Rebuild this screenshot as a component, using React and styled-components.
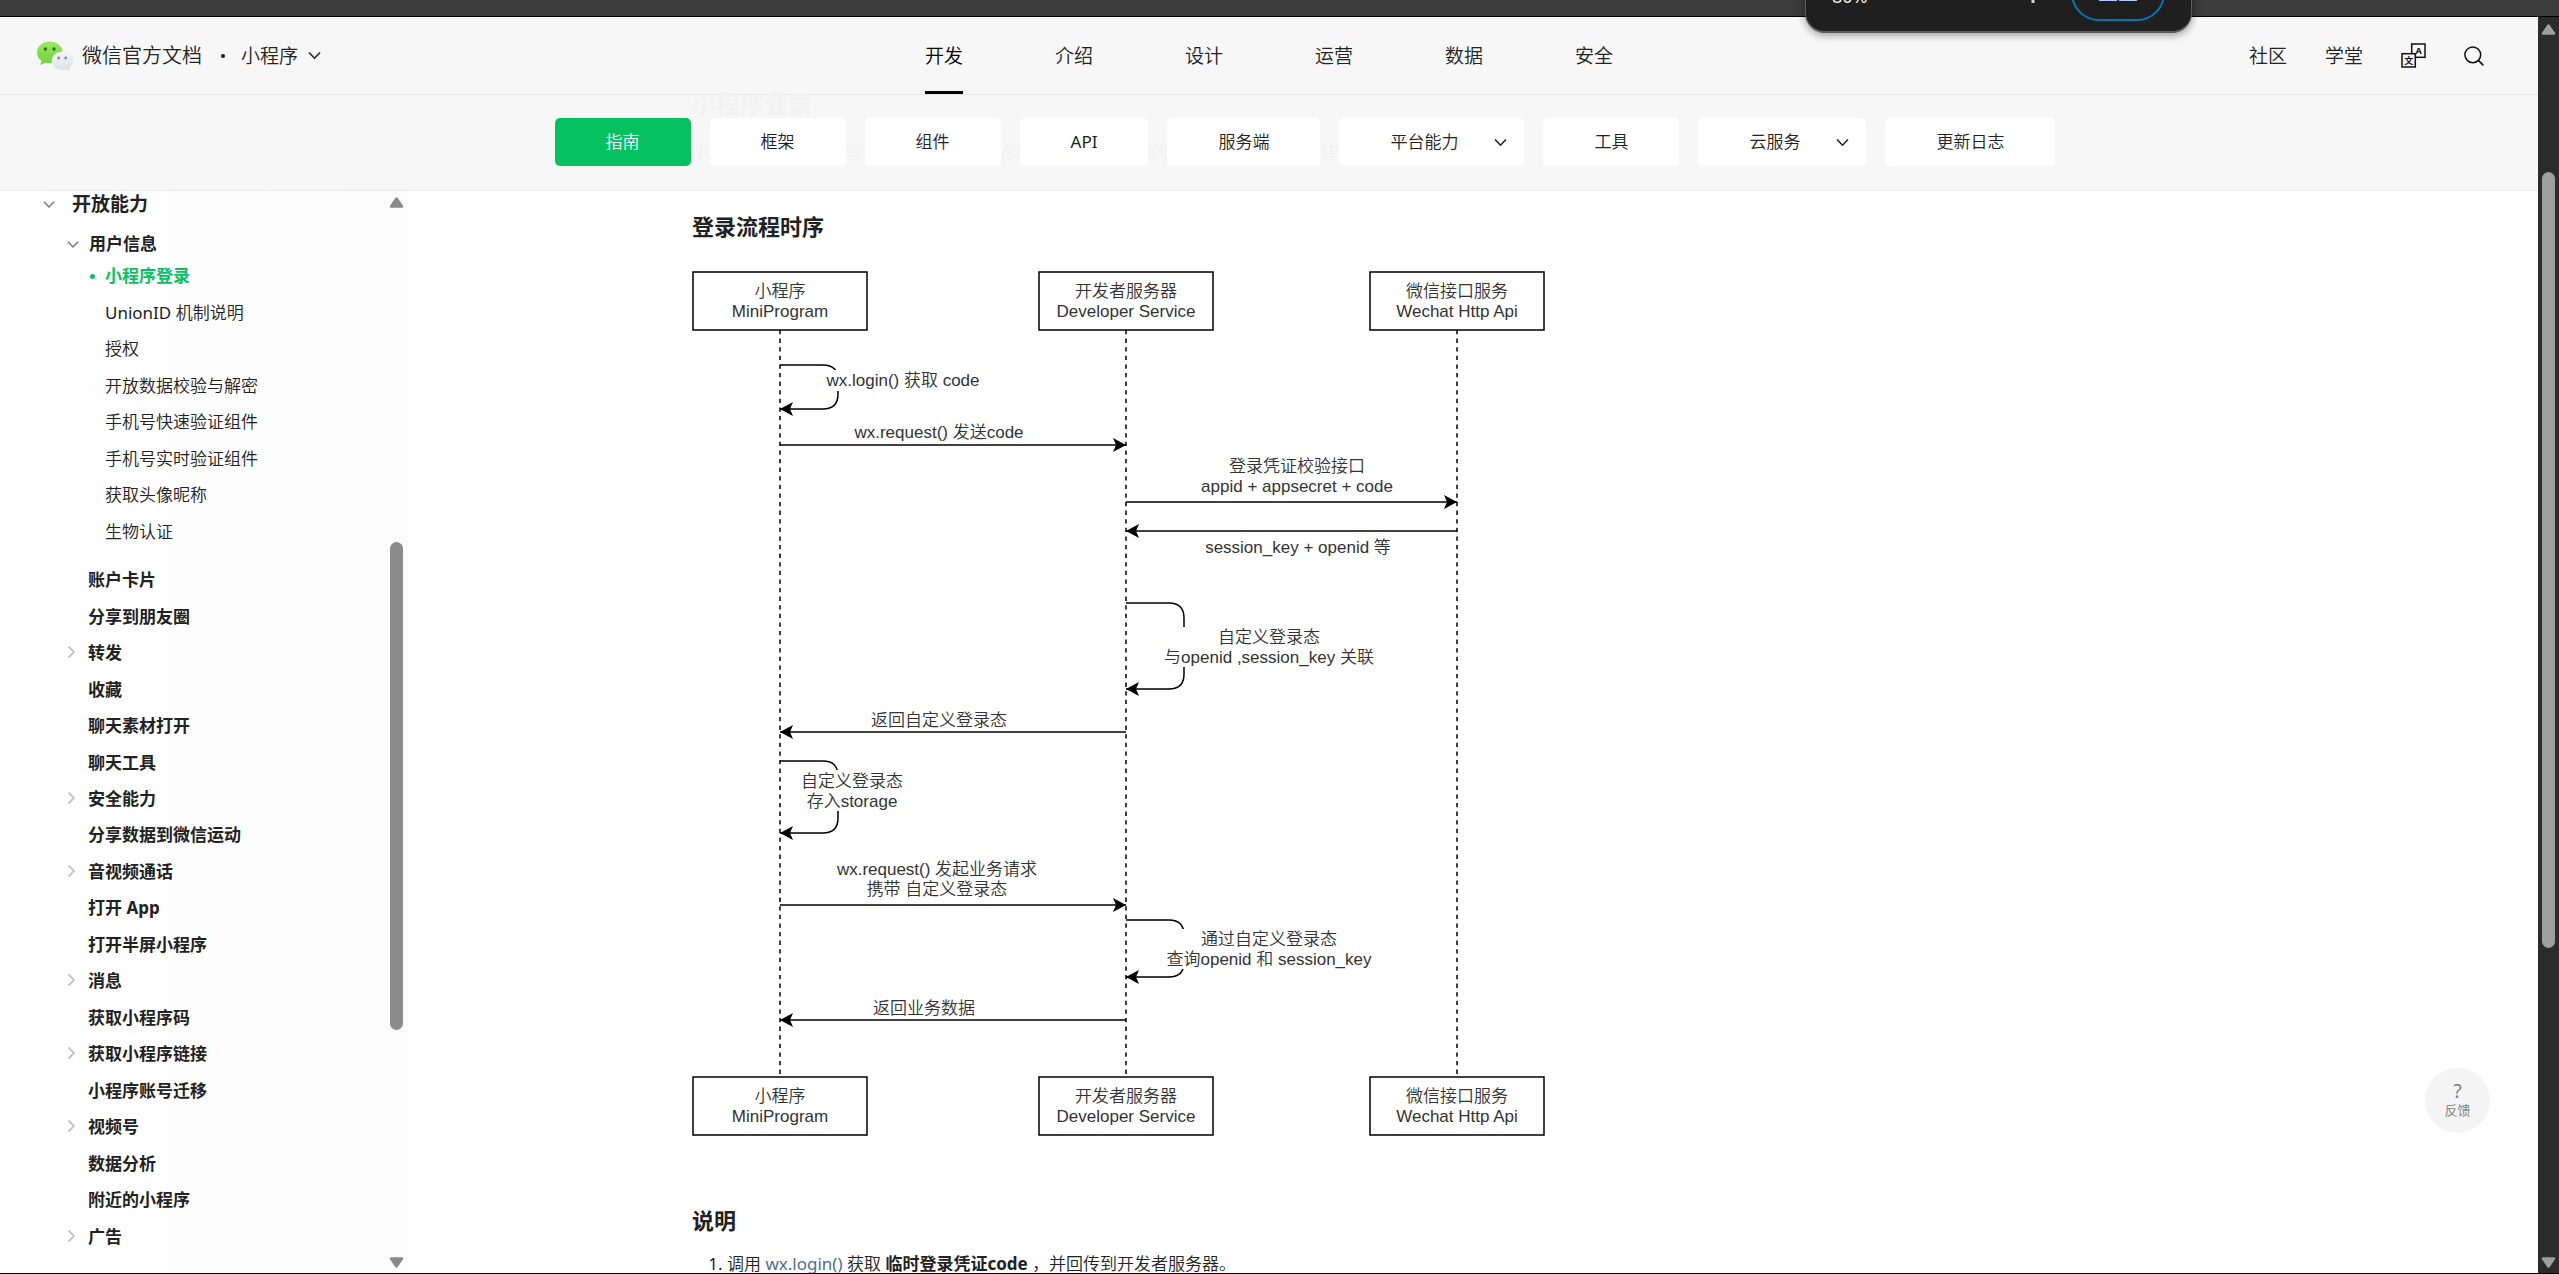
import React from "react";
import styled, { createGlobalStyle, css } from "styled-components";

const GlobalStyle = createGlobalStyle`
  * {
    box-sizing: border-box;
  }

  body {
    margin: 0;
    overflow: hidden;
    background: #fff;
    color: #222;
    font-family: "Noto Sans", "Noto Sans CJK SC", sans-serif;
    font-size: 17px;
    font-weight: 350;
  }

  button {
    padding: 0;
    border: 0;
    background: none;
    color: inherit;
    font: inherit;
    cursor: pointer;
  }

  a {
    color: inherit;
    text-decoration: none;
  }

  ul {
    margin: 0;
    padding: 0;
    list-style: none;
  }
`;

const Window = styled.div`
  position: relative;
  display: flex;
  flex-direction: column;
  height: 100vh;
  overflow: hidden;
  border-bottom: 1px solid #000;
`;

const Strip = styled.div`
  flex: none;
  height: 17px;
  background: #3b3b3b;
  border-bottom: 1px solid #000;
`;

const Viewport = styled.div`
  display: flex;
  flex: 1;
  min-height: 0;
`;

const Site = styled.div`
  display: flex;
  flex-direction: column;
  flex: 1;
  min-width: 0;
`;

// latin glyphs get too thin at the body weight
const Latin = styled.span`
  font-weight: 400;
`;

/* zoom popup hanging from the browser toolbar */

const ZoomPopup = styled.div`
  position: absolute;
  top: -46px;
  right: 367px;
  display: flex;
  align-items: center;
  width: 387px;
  height: 79px;
  padding: 0 26px;
  background: #1f1f1f;
  border: 1px solid #5c5c5c;
  border-bottom-width: 2px;
  border-radius: 20px;
  box-shadow: 0 2px 8px rgba(0, 0, 0, 0.4);
  color: #f0f0f0;
  font-size: 18px;
  line-height: 24px;
`;

const ZoomLevel = styled.span`
  padding-top: 6px;
  font-weight: 400;
`;

const ZoomPlus = styled.button`
  display: flex;
  margin-left: auto;
`;

const ZoomReset = styled.button`
  width: 94px;
  height: 56px;
  margin-left: 30px;
  border: 2px solid #0078b4;
  border-radius: 28px;
  color: #b9c8ff;
  font-size: 20px;
`;

/* header */

const Header = styled.header`
  display: grid;
  grid-template-columns: 1fr auto 1fr;
  align-items: center;
  flex: none;
  height: 78px;
  padding: 0 36px;
  background: #f7f7f7;
  border-bottom: 1px solid #e4e4e4;
  font-size: 19px;
  line-height: 28px;
`;

const Brand = styled.div`
  display: flex;
  align-items: center;
`;

const BrandName = styled.a`
  display: flex;
  align-items: center;
  gap: 8px;
  font-size: 20px;
`;

const Dot = styled.span`
  width: 4px;
  height: 4px;
  margin: 0 16px 0 19px;
  border-radius: 2px;
  background: #222;
`;

const ProductButton = styled.button`
  display: flex;
  align-items: center;
  gap: 10px;
`;

const Nav = styled.nav`
  display: flex;
  gap: 92px;
  height: 77px;
`;

const NavLink = styled.a`
  display: flex;
  align-items: center;
  border-top: 3px solid transparent;
  border-bottom: 3px solid ${props => (props.$active ? "#000" : "transparent")};
  color: ${props => (props.$active ? "#000" : "#222")};
`;

const Tools = styled.div`
  display: flex;
  align-items: center;
  justify-content: flex-end;
  gap: 38px;
  padding-right: 18px;

  button {
    display: flex;
  }
`;

/* second level tabs */

const SubNav = styled.nav`
  position: relative;
  display: flex;
  align-items: center;
  justify-content: center;
  gap: 19px;
  flex: none;
  height: 96px;
  padding: 0 0 1px 72px;
  background: #f7f7f7;
  border-bottom: 1px solid #ebebeb;
`;

const Tab = styled.a`
  position: relative;
  display: flex;
  align-items: center;
  height: 48px;
  padding: 0 ${props => (props.$more ? 17 : 51)}px 0 51px;
  border-radius: 5px;
  background: ${props => (props.$active ? "#07c160" : "#fff")};
  color: ${props => (props.$active ? "#fff" : "#222")};
  line-height: 24px;

  svg {
    margin-left: 36px;
  }
`;

/* page title and intro that show faintly through the bar */
const Underlay = styled.div`
  position: absolute;
  top: 0;
  left: 692px;
  color: #f2f2f2;
  font-weight: 400;
  white-space: nowrap;
`;

const UnderTitle = styled.div`
  font-size: 24px;
  font-weight: 700;
  line-height: 18px;
`;

const UnderText = styled.div`
  padding-top: 28px;
  line-height: 24px;
`;

/* sidebar */

const Body = styled.div`
  display: flex;
  flex: 1;
  min-height: 0;
`;

const Sidebar = styled.aside`
  display: flex;
  flex: none;
  width: 408px;
  background: linear-gradient(90deg, #fff, #fbfbfb);
`;

const Tree = styled.div`
  display: flex;
  flex-direction: column;
  flex: 1;
  padding-bottom: 18px;
  white-space: nowrap;
`;

const TreeHeading = styled.button`
  display: flex;
  align-items: center;
  gap: ${props => (props.$sub ? 10 : 17)}px;
  height: 26px;
  padding-left: ${props => (props.$sub ? 67 : 43)}px;
  margin-bottom: ${props => (props.$sub ? 1 : 14)}px;
  font-size: ${props => (props.$sub ? 17 : 19)}px;
  font-weight: 700;
  line-height: 26px;
`;

const rows = css`
  display: flex;
  flex-direction: column;

  li {
    display: flex;
    flex: 1;
    align-items: center;
  }
`;

const PageList = styled.ul`
  ${rows}
  flex: 8 1 0;
  margin-bottom: 12px;
`;

const TopicList = styled.ul`
  ${rows}
  flex: 19 1 0;
`;

const PageLink = styled.a`
  display: flex;
  align-items: center;
  padding-left: ${props => (props.$active ? 90 : 105)}px;
  color: ${props => (props.$active ? "#07c160" : "#222")};
  font-weight: ${props => (props.$active ? 700 : 350)};
  line-height: 28px;
  white-space: pre;

  &::before {
    content: "";
    display: ${props => (props.$active ? "block" : "none")};
    width: 5px;
    height: 5px;
    margin-right: 10px;
    border-radius: 3px;
    background: #07c160;
  }
`;

const TopicLink = styled.a`
  display: grid;
  grid-template-columns: 21px auto;
  align-items: center;
  padding-left: 67px;
  font-weight: 700;
  line-height: 28px;
`;

/* scrollbars */

const ScrollColumn = styled.div`
  display: flex;
  flex-direction: column;
  align-items: center;
  flex: none;
  width: ${props => (props.$page ? 21 : 23)}px;
  padding: ${props => (props.$page ? "7px 0 5px" : "6px 0 5px")};
  background: ${props => (props.$page ? "#2b2b2b" : "transparent")};
  color: ${props => (props.$page ? "#9f9f9f" : "#8b8b8b")};
`;

const Gap = styled.div`
  flex: ${props => props.$grow} 1 0;
`;

const Thumb = styled.div`
  flex: ${props => props.$grow} 1 0;
  width: 13px;
  border-radius: 7px;
  background: currentColor;
`;

/* article */

const Article = styled.main`
  flex: 1;
  min-width: 0;
  padding: 20px 0 0 284px;
  overflow: hidden;
`;

const Heading = styled.h3`
  margin: ${props => (props.$spaced ? 69 : 0)}px 0 0;
  font-size: 22px;
  font-weight: 700;
  line-height: 30px;
`;

const Diagram = styled.svg`
  display: block;
  margin-top: 29px;
  font-family: "Liberation Sans", "Noto Sans CJK SC", sans-serif;
  font-size: 17px;
`;

const Steps = styled.ol`
  margin: 15px 0 0;
  padding-left: 35px;
  line-height: 28px;

  li::marker {
    font-weight: 400;
  }

  a {
    color: #576b95;
    font-weight: 400;
  }

  strong {
    font-weight: 700;
  }
`;

const Feedback = styled.button`
  position: absolute;
  right: 69px;
  bottom: 140px;
  display: flex;
  flex-direction: column;
  align-items: center;
  justify-content: center;
  width: 65px;
  height: 65px;
  padding-bottom: 2px;
  border-radius: 50%;
  background: #f4f4f4;
  color: #7d7d7d;
  font-size: 13px;
  line-height: 18px;
`;

const FeedbackMark = styled.span`
  font-size: 19px;
  font-weight: 400;
  line-height: 20px;
`;

const NAV = ["开发", "介绍", "设计", "运营", "数据", "安全"];

const TABS = [
  { name: "指南", active: true },
  { name: "框架" },
  { name: "组件" },
  { name: "API", latin: true },
  { name: "服务端" },
  { name: "平台能力", more: true },
  { name: "工具" },
  { name: "云服务", more: true },
  { name: "更新日志" }
];

const PAGES = [
  { name: "小程序登录", active: true },
  { latin: "UnionID ", name: "机制说明" },
  { name: "授权" },
  { name: "开放数据校验与解密" },
  { name: "手机号快速验证组件" },
  { name: "手机号实时验证组件" },
  { name: "获取头像昵称" },
  { name: "生物认证" }
];

const TOPICS = [
  { name: "账户卡片" },
  { name: "分享到朋友圈" },
  { name: "转发", more: true },
  { name: "收藏" },
  { name: "聊天素材打开" },
  { name: "聊天工具" },
  { name: "安全能力", more: true },
  { name: "分享数据到微信运动" },
  { name: "音视频通话", more: true },
  { name: "打开 App" },
  { name: "打开半屏小程序" },
  { name: "消息", more: true },
  { name: "获取小程序码" },
  { name: "获取小程序链接", more: true },
  { name: "小程序账号迁移" },
  { name: "视频号", more: true },
  { name: "数据分析" },
  { name: "附近的小程序" },
  { name: "广告", more: true }
];

const ChevronDown = ({ color = "#222", size = 13 }) => (
  <svg width={size} height="9" viewBox="0 0 13 9" fill="none">
    <path d="M1 1.5 6.5 7.2 12 1.5" stroke={color} strokeWidth="1.6" />
  </svg>
);

const ChevronRight = () => (
  <svg width="9" height="14" viewBox="0 0 9 14" fill="none">
    <path d="M1.5 1.5 7 7l-5.5 5.5" stroke="#c4c4c4" strokeWidth="1.8" />
  </svg>
);

const Triangle = ({ down }) => (
  <svg width="15" height="11" viewBox="0 0 15 11">
    <path
      d={down ? "M2 1.5h11L7.5 9.5z" : "M2 9.5h11L7.5 1.5z"}
      fill="currentColor"
      stroke="currentColor"
      strokeWidth="2.5"
      strokeLinejoin="round"
    />
  </svg>
);

const Logo = () => (
  <svg width="38" height="30" viewBox="0 0 38 30">
    <defs>
      <linearGradient id="green" x1="0" y1="0" x2="0" y2="1">
        <stop offset="0" stopColor="#9be860" />
        <stop offset="1" stopColor="#6fd03a" />
      </linearGradient>
      <linearGradient id="grey" x1="0" y1="0" x2="0" y2="1">
        <stop offset="0" stopColor="#f3f4f7" />
        <stop offset="1" stopColor="#dfe1e6" />
      </linearGradient>
    </defs>
    <path
      d="M13.8.5C6.7.5 1 5.3 1 11.4c0 3.5 1.7 6.3 4.6 8.3l-1.1 3.6c-.1.5.2.7.6.5l4.3-2.4c1.4.4 2.9.7 4.4.7 7.1 0 12.8-4.8 12.8-10.8S20.9.5 13.8.5z"
      fill="url(#green)"
    />
    <path
      d="M26.5 10.5c-6 0-10.8 4.2-10.8 9.3s4.8 9.2 10.8 9.2c1.3 0 2.5-.2 3.6-.5l3.5 1.4c.4.2.6-.1.5-.5l-.9-2.6c2.5-1.7 4.1-4.1 4.1-7 0-5.1-4.8-9.3-10.8-9.3z"
      fill="url(#grey)"
    />
    <g fill="#1c7a33">
      <circle cx="9.4" cy="8" r="1.7" />
      <circle cx="18" cy="8" r="1.7" />
    </g>
    <g fill="#8b9097">
      <circle cx="22.7" cy="17" r="1.4" />
      <circle cx="29.7" cy="17" r="1.4" />
    </g>
  </svg>
);

const TranslateIcon = () => (
  <svg width="25" height="25" viewBox="0 0 25 25">
    <g fill="#f7f7f7" stroke="#111" strokeWidth="1.5">
      <rect x="10.7" y="1" width="13.3" height="13.3" />
      <rect x="1" y="10.7" width="13.3" height="13.3" />
    </g>
    <g
      fill="#111"
      textAnchor="middle"
      fontWeight="700"
      fontFamily="Noto Sans, Noto Sans CJK SC, sans-serif"
    >
      <text x="17.5" y="11" fontSize="9">
        A
      </text>
      <text x="7.7" y="21" fontSize="9">
        文
      </text>
    </g>
  </svg>
);

const SearchIcon = () => (
  <svg width="20" height="20" viewBox="0 0 20 20" fill="none">
    <circle cx="8.8" cy="8.8" r="7.9" stroke="#111" strokeWidth="1.5" />
    <path d="m14.4 14.4 5 5" stroke="#111" strokeWidth="1.6" />
  </svg>
);

const Actor = ({ x, y, name, label }) => (
  <g>
    <rect x={x - 87} y={y} width="174" height="58" fill="#fff" stroke="#000" strokeWidth="1.5" />
    <Label x={x} y={y + 20} lines={[name, label]} />
  </g>
);

// y is the middle of the first line
const Label = ({ x, y, lines }) => (
  <text x={x} textAnchor="middle" fill="#333">
    {lines.map((line, i) => (
      <tspan key={line} x={x} y={y + 5 + i * 20}>
        {line}
      </tspan>
    ))}
  </text>
);

const Message = ({ from, to, y }) => {
  const d = to > from ? -1 : 1;
  return (
    <g>
      <path d={`M${from} ${y}H${to}`} stroke="#000" strokeWidth="1.5" />
      <path d={`M${to} ${y}l${13 * d} -7l${-3 * d} 7l${3 * d} 7z`} />
    </g>
  );
};

// self call: hideTop / hideBottom bound the part covered by its label
const SelfCall = ({ x, top, bottom, hideTop, hideBottom }) => (
  <g>
    <path
      d={`M${x} ${top}h43q15 0 15 15V${bottom - 15}q0 15 -15 15h-43`}
      fill="none"
      stroke="#000"
      strokeWidth="1.5"
    />
    <rect x={x + 30} y={hideTop} width="32" height={hideBottom - hideTop} fill="#fff" />
    <path d={`M${x} ${bottom}l13 -7l-3 7l3 7z`} />
  </g>
);

const ACTORS = [
  { x: 88, name: "小程序", label: "MiniProgram" },
  { x: 434, name: "开发者服务器", label: "Developer Service" },
  { x: 765, name: "微信接口服务", label: "Wechat Http Api" }
];

const LoginSequence = () => (
  <Diagram width="854" height="866" viewBox="0 0 854 866" role="img" aria-label="登录流程时序">
    {ACTORS.map(actor => (
      <path
        key={actor.x}
        d={`M${actor.x} 60V807`}
        stroke="#000"
        strokeWidth="1.5"
        strokeDasharray="4.3 4.3"
      />
    ))}
    {ACTORS.map(actor => (
      <React.Fragment key={actor.x}>
        <Actor {...actor} y={2} />
        <Actor {...actor} y={807} />
      </React.Fragment>
    ))}

    <SelfCall x={88} top={95} bottom={139} hideTop={100} hideBottom={121} />
    <Label x={211} y={111} lines={["wx.login() 获取 code"]} />
    <Message from={88} to={434} y={175} />
    <Label x={247} y={163} lines={["wx.request() 发送code"]} />

    <Label x={605} y={197} lines={["登录凭证校验接口", "appid + appsecret + code"]} />
    <Message from={434} to={765} y={232} />
    <Message from={765} to={434} y={261} />
    <Label x={606} y={278} lines={["session_key + openid 等"]} />

    <SelfCall x={434} top={333} bottom={419} hideTop={357} hideBottom={397} />
    <Label x={577} y={368} lines={["自定义登录态", "与openid ,session_key 关联"]} />
    <Message from={434} to={88} y={462} />
    <Label x={247} y={451} lines={["返回自定义登录态"]} />

    <SelfCall x={88} top={491} bottom={563} hideTop={500} hideBottom={541} />
    <Label x={160} y={512} lines={["自定义登录态", "存入storage"]} />

    <Label x={245} y={600} lines={["wx.request() 发起业务请求", "携带 自定义登录态"]} />
    <Message from={88} to={434} y={635} />
    <SelfCall x={434} top={650} bottom={707} hideTop={659} hideBottom={699} />
    <Label x={577} y={670} lines={["通过自定义登录态", "查询openid 和 session_key"]} />
    <Message from={434} to={88} y={750} />
    <Label x={232} y={739} lines={["返回业务数据"]} />
  </Diagram>
);

export default function App() {
  return (
    <Window>
      <GlobalStyle />
      <Strip />
      <Viewport>
        <Site>
          <Header>
            <Brand>
              <BrandName href="#">
                <Logo />
                微信官方文档
              </BrandName>
              <Dot />
              <ProductButton>
                小程序
                <ChevronDown />
              </ProductButton>
            </Brand>
            <Nav>
              {NAV.map((name, i) => (
                <NavLink key={name} href="#" $active={i === 0}>
                  {name}
                </NavLink>
              ))}
            </Nav>
            <Tools>
              <a href="#">社区</a>
              <a href="#">学堂</a>
              <button aria-label="语言">
                <TranslateIcon />
              </button>
              <button aria-label="搜索">
                <SearchIcon />
              </button>
            </Tools>
          </Header>

          <SubNav>
            <Underlay aria-hidden="true">
              <UnderTitle>小程序登录</UnderTitle>
              <UnderText>
                小程序可以通过微信官方提供的登录能力方便地获取微信提供的用户身份标识，快速建立小程序内的用户体系。
              </UnderText>
            </Underlay>
            {TABS.map(tab => (
              <Tab key={tab.name} href="#" $active={tab.active} $more={tab.more}>
                {tab.latin ? <Latin>{tab.name}</Latin> : tab.name}
                {tab.more && <ChevronDown />}
              </Tab>
            ))}
          </SubNav>

          <Body>
            <Sidebar>
              <Tree>
                <TreeHeading>
                  <ChevronDown color="#777" size={12} />
                  开放能力
                </TreeHeading>
                <TreeHeading $sub>
                  <ChevronDown color="#777" size={12} />
                  用户信息
                </TreeHeading>
                <PageList>
                  {PAGES.map(page => (
                    <li key={page.name}>
                      <PageLink href="#" $active={page.active}>
                        {page.latin && <Latin>{page.latin}</Latin>}
                        {page.name}
                      </PageLink>
                    </li>
                  ))}
                </PageList>
                <TopicList>
                  {TOPICS.map(topic => (
                    <li key={topic.name}>
                      <TopicLink href="#">
                        <span>{topic.more && <ChevronRight />}</span>
                        {topic.name}
                      </TopicLink>
                    </li>
                  ))}
                </TopicList>
              </Tree>
              <ScrollColumn>
                <Triangle />
                <Gap $grow={334} />
                <Thumb $grow={489} />
                <Gap $grow={227} />
                <Triangle down />
              </ScrollColumn>
            </Sidebar>

            <Article>
              <Heading>登录流程时序</Heading>
              <LoginSequence />
              <Heading $spaced>说明</Heading>
              <Steps>
                <li>
                  调用 <a href="#">wx.login()</a> 获取 <strong>临时登录凭证code</strong>{" "}
                  ，并回传到开发者服务器。
                </li>
              </Steps>
            </Article>
          </Body>
        </Site>
        <ScrollColumn $page>
          <Triangle />
          <Gap $grow={137} />
          <Thumb $grow={777} />
          <Gap $grow={309} />
          <Triangle down />
        </ScrollColumn>
      </Viewport>

      <ZoomPopup>
        <ZoomLevel>80%</ZoomLevel>
        <ZoomPlus aria-label="放大">
          <svg width="16" height="22" viewBox="0 0 16 22">
            <path d="M8 4v17M0 12h16" stroke="#d0d0d0" strokeWidth="3" />
          </svg>
        </ZoomPlus>
        <ZoomReset>重置</ZoomReset>
      </ZoomPopup>

      <Feedback>
        <FeedbackMark>?</FeedbackMark>
        反馈
      </Feedback>
    </Window>
  );
}
